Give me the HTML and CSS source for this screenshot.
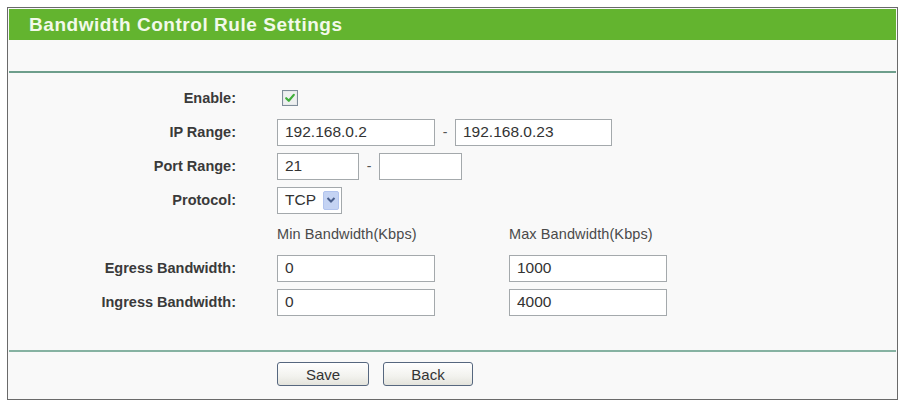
FILE: index.html
```html
<!DOCTYPE html>
<html>
<head>
<meta charset="utf-8">
<link rel="stylesheet" href="styles.css">
</head>
<body>
<div class="frame">
  <div class="header">Bandwidth Control Rule Settings</div>
  <div class="spacer"></div>
  <div class="divider"></div>
  <div class="form">
    <div class="label">Enable:</div>
    <div class="cell wide">
      <span class="checkbox">
        <svg width="16" height="16" viewBox="0 0 16 16"><rect x="0.5" y="0.5" width="15" height="15" fill="#e6e8ea" stroke="#7f8d9a"/><rect x="2" y="2" width="12" height="12" fill="#eef0f0"/><path d="M4.2 8.2 L6.8 10.8 L11.8 4.9" fill="none" stroke="#3fae3a" stroke-width="2.2" stroke-linecap="round" stroke-linejoin="round"/></svg>
      </span>
    </div>

    <div class="label">IP Range:</div>
    <div class="cell wide">
      <span class="input w158">192.168.0.2</span>
      <span class="sep">-</span>
      <span class="input w157">192.168.0.23</span>
    </div>

    <div class="label">Port Range:</div>
    <div class="cell wide">
      <span class="input w82">21</span>
      <span class="sep">-</span>
      <span class="input w83"></span>
    </div>

    <div class="label">Protocol:</div>
    <div class="cell wide">
      <span class="select">TCP<span class="arrow"><svg width="10" height="8" viewBox="0 0 10 8"><path d="M1.5 2 L5 5.5 L8.5 2" fill="none" stroke="#4a5f8c" stroke-width="2"/></svg></span></span>
    </div>

    <div class="label"></div>
    <div class="cell colhead">Min Bandwidth(Kbps)</div>
    <div class="cell colhead">Max Bandwidth(Kbps)</div>

    <div class="label">Egress Bandwidth:</div>
    <div class="cell"><span class="input w158">0</span></div>
    <div class="cell"><span class="input w158">1000</span></div>

    <div class="label">Ingress Bandwidth:</div>
    <div class="cell"><span class="input w158">0</span></div>
    <div class="cell"><span class="input w158">4000</span></div>
  </div>
  <div class="divider light"></div>
  <div class="buttons">
    <button class="btn save">Save</button>
    <button class="btn back">Back</button>
  </div>
</div>
</body>
</html>
```

FILE: styles.css
```css
html, body {
  margin: 0;
  padding: 0;
  background: #ffffff;
}

body {
  font-family: "Liberation Sans", Arial, sans-serif;
  color: #333333;
}

.frame {
  margin: 7px 0 0 7px;
  width: 887px;
  height: 389px;
  border: 1px solid #6a6a6a;
  padding: 1px;
  box-sizing: content-box;
  background: #f9f9f9;
  display: flex;
  flex-direction: column;
}

.frame > * {
  flex: none;
}

.header {
  height: 31px;
  background: #63b42f;
  color: #f2f9ea;
  font-weight: bold;
  font-size: 19px;
  letter-spacing: 0.55px;
  line-height: 31px;
  padding-left: 20px;
}

.spacer {
  height: 31px;
}

.divider {
  height: 2px;
  background: #6e9e8c;
}

.divider.light {
  background: #86b2a2;
}

.form {
  height: 277px;
  box-sizing: border-box;
  padding-top: 8px;
  display: grid;
  grid-template-columns: 268px 232px 1fr;
  grid-auto-rows: 34px;
  align-content: start;
}

.label {
  box-sizing: border-box;
  padding-right: 41px;
  text-align: right;
  font-weight: bold;
  font-size: 14.5px;
  color: #3a3a3a;
  display: flex;
  align-items: center;
  justify-content: flex-end;
}

.cell {
  display: flex;
  align-items: center;
  font-size: 15px;
}

.cell.wide {
  grid-column: 2 / span 2;
}

.colhead {
  color: #4a4a4a;
  font-size: 14.5px;
  letter-spacing: 0.1px;
}

.checkbox {
  display: flex;
  margin-left: 5px;
}

.input {
  display: flex;
  align-items: center;
  height: 27px;
  box-sizing: border-box;
  border: 1px solid #a4a9ac;
  background: #ffffff;
  padding-left: 7px;
  font-size: 15.5px;
  color: #333333;
}

.w158 { width: 158px; }
.w157 { width: 157px; }
.w82 { width: 82px; }
.w83 { width: 83px; }

.sep {
  width: 20px;
  text-align: center;
  font-size: 14px;
  color: #555555;
}

.select {
  display: flex;
  align-items: center;
  justify-content: space-between;
  width: 65px;
  height: 27px;
  box-sizing: border-box;
  border: 1px solid #a4a9ac;
  background: #ffffff;
  padding: 0 2px 0 7px;
  font-size: 15.5px;
  color: #333333;
}

.arrow {
  display: flex;
  align-items: center;
  justify-content: center;
  width: 16px;
  height: 19px;
  box-sizing: border-box;
  background: #c4d3f3;
  border: 1px solid #b2c4ee;
  border-radius: 2px;
}

.buttons {
  height: 44px;
  display: flex;
  align-items: center;
  gap: 14px;
  padding-left: 268px;
}

.btn {
  height: 24px;
  box-sizing: border-box;
  border: 1px solid #56677f;
  border-radius: 3px;
  background: linear-gradient(#ffffff, #f2f2ee 60%, #e3e3dc);
  font-family: "Liberation Sans", Arial, sans-serif;
  font-size: 15px;
  color: #333333;
  padding: 0;
}

.save { width: 92px; }
.back { width: 90px; }
```
